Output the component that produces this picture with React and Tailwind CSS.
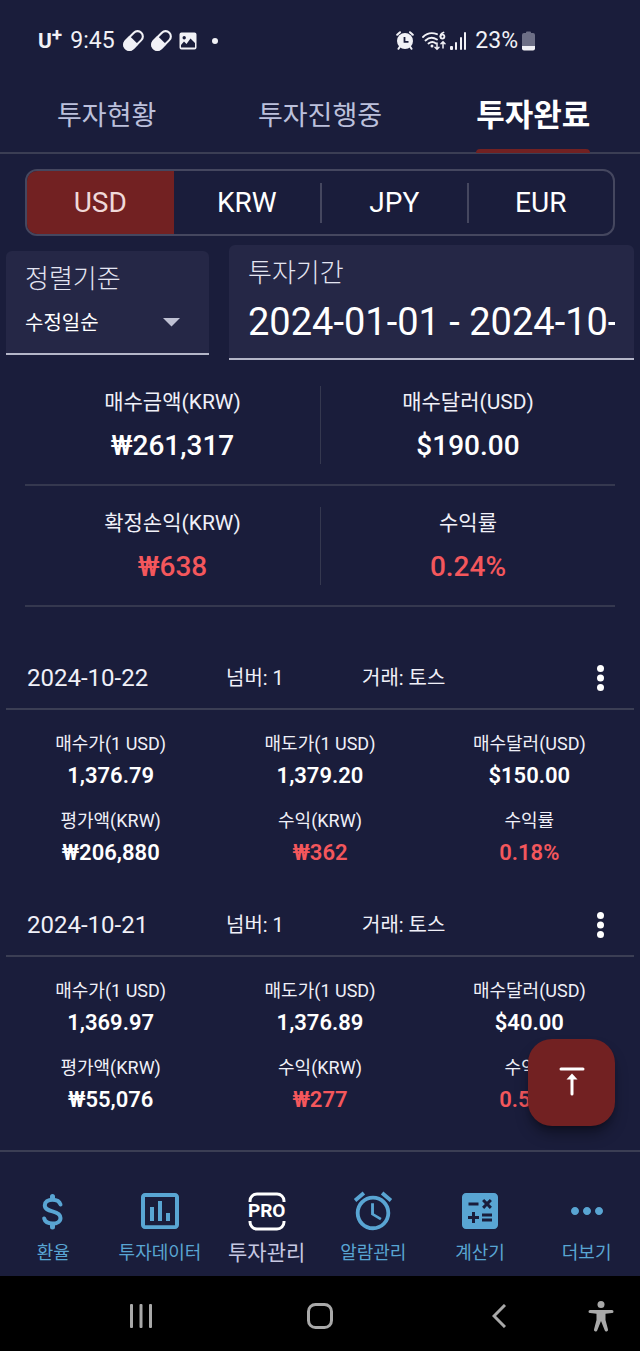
import { useState } from 'react'
import clsx from 'clsx'
import { MdAccessAlarm, MdCalculate, MdMoreHoriz } from 'react-icons/md'

const TABS = ['투자현황', '투자진행중', '투자완료']
const CURRENCIES = ['USD', 'KRW', 'JPY', 'EUR']

const SUMMARY = [
  [
    { label: '매수금액(KRW)', value: '₩261,317' },
    { label: '매수달러(USD)', value: '$190.00' },
  ],
  [
    { label: '확정손익(KRW)', value: '₩638', profit: true },
    { label: '수익률', value: '0.24%', profit: true },
  ],
]

const RECORDS = [
  {
    date: '2024-10-22',
    number: 1,
    broker: '토스',
    cells: [
      { label: '매수가(1 USD)', value: '1,376.79' },
      { label: '매도가(1 USD)', value: '1,379.20' },
      { label: '매수달러(USD)', value: '$150.00' },
      { label: '평가액(KRW)', value: '₩206,880' },
      { label: '수익(KRW)', value: '₩362', profit: true },
      { label: '수익률', value: '0.18%', profit: true },
    ],
  },
  {
    date: '2024-10-21',
    number: 1,
    broker: '토스',
    cells: [
      { label: '매수가(1 USD)', value: '1,369.97' },
      { label: '매도가(1 USD)', value: '1,376.89' },
      { label: '매수달러(USD)', value: '$40.00' },
      { label: '평가액(KRW)', value: '₩55,076' },
      { label: '수익(KRW)', value: '₩277', profit: true },
      { label: '수익률', value: '0.51%', profit: true },
    ],
  },
]

function PillIcon() {
  return (
    <svg width="21" height="21" viewBox="0 0 20 20" fill="none">
      <g transform="rotate(-45 10 10)">
        <rect x="-.500" y="5" width="21" height="10" rx="5" stroke="#f1f1f6" strokeWidth="2" />
        <path d="M10.500 4H4.500a6 6 0 000 12h6z" fill="#f1f1f6" />
      </g>
    </svg>
  )
}

function ImageIcon() {
  return (
    <svg width="18" height="18" viewBox="0 0 18 18">
      <path
        fillRule="evenodd"
        fill="#f1f1f6"
        d="M2.500 .500h13a2 2 0 012 2v13a2 2 0 01-2 2h-13a2 2 0 01-2-2v-13a2 2 0 012-2zM5.200 4a1.700 1.700 0 100 3.400A1.700 1.700 0 005.200 4zM2 13v2.500h14V11l-4.500-4.500L7.500 12 5 9.500z"
      />
    </svg>
  )
}

function StatusAlarmIcon() {
  return (
    <svg width="18" height="19" viewBox="0 0 18 19">
      <g stroke="#f1f1f6" strokeWidth="2" strokeLinecap="round">
        <path d="M1.200 3.800L4 1.200M16.800 3.800L14 1.200M4 15.500L2.500 17.800M14 15.500l1.500 2.300" />
      </g>
      <circle cx="9" cy="10" r="8" fill="#f1f1f6" />
      <path d="M8.500 6v4.800h4" fill="none" stroke="#1a1d3b" strokeWidth="1.800" />
    </svg>
  )
}

function WifiIcon() {
  return (
    <svg width="24" height="20" viewBox="0 0 24 20" fill="none" stroke="#f1f1f6" strokeWidth="1.800" strokeLinecap="round">
      <path d="M1 6C5 2 10 1.200 15 3.200M3.500 9.500C7 6.200 11 6 15 8.500M6.500 12.500c2.500-2 5-2 7.500 0" />
      <circle cx="10" cy="15" r="1.500" fill="#f1f1f6" stroke="none" />
      <path d="M21.500 1.500c-2 .500-3 2-3 3.800" />
      <circle cx="20.400" cy="5.600" r="2" />
      <path d="M15 12v6M13 16.200l2 2 2-2M21 17v-6M19 12.800l2-2 2 2" strokeWidth="1.500" />
    </svg>
  )
}

function SignalIcon() {
  return (
    <svg width="17" height="18" viewBox="0 0 17 18" fill="#f1f1f6">
      <rect x="0" y="14" width="3" height="4" rx="1" />
      <rect x="5" y="10" width="2" height="8" rx="1" />
      <rect x="10" y="5" width="2" height="13" rx="1" />
      <rect x="14" y="0" width="2" height="18" rx="1" />
    </svg>
  )
}

function BatteryIcon() {
  return (
    <svg width="13" height="20" viewBox="0 0 13 20">
      <path d="M4 1.500Q4 .500 5 .500h3q1 0 1 1V2h2q2 0 2 2v11H0V4q0-2 2-2h2z" fill="#6d6f86" />
      <path d="M0 15h13v2.500q0 2-2 2H2q-2 0-2-2z" fill="#f1f1f6" />
    </svg>
  )
}

function StatusBar() {
  return (
    <header className="flex h-20 items-center px-[38px] pt-px text-[#f1f1f6]">
      <span className="flex items-start text-[21px] leading-6 font-bold">
        U<sup className="top-0 text-[19px] leading-3">+</sup>
      </span>
      <span className="ml-2 text-[23px] leading-6">9:45</span>
      <span className="ml-2 flex items-center gap-[7px]">
        <PillIcon />
        <PillIcon />
        <ImageIcon />
        <span className="ml-2 size-[6px] rounded-full bg-[#f1f1f6]" />
      </span>
      <span className="mr-[67px] ml-auto flex items-center">
        <StatusAlarmIcon />
        <span className="ml-2"><WifiIcon /></span>
        <span className="ml-1"><SignalIcon /></span>
        <span className="ml-2 text-[23px] leading-6">23%</span>
        <span className="ml-1"><BatteryIcon /></span>
      </span>
    </header>
  )
}

function Tabs() {
  const [active, setActive] = useState('투자완료')

  return (
    <nav className="grid h-[74px] grid-cols-3 border-b-2 border-[#3b3e54]">
      {TABS.map((tab) => (
        <button
          key={tab}
          onClick={() => setActive(tab)}
          className={clsx(
            'flex justify-center',
            active === tab ? 'text-[31px] font-bold text-white' : 'text-[27px] text-[#bcc0dc]'
          )}
        >
          <span className="flex h-[73px] flex-col">
            <span className="flex flex-1 items-center pt-1">{tab}</span>
            <span className={clsx('h-1 rounded-t-sm', active === tab && 'bg-[#722122]')} />
          </span>
        </button>
      ))}
    </nav>
  )
}

function CurrencyPicker() {
  const [currency, setCurrency] = useState('USD')

  return (
    <div className="mx-[25px] mt-[15px] flex h-[67px] overflow-hidden rounded-xl border-2 border-[#45475f]">
      {CURRENCIES.map((code, i) => (
        <button
          key={code}
          onClick={() => setCurrency(code)}
          className={clsx(
            'flex flex-1 items-center text-[28px] leading-8',
            currency === code ? 'bg-[#722122] text-[#f0d9d9]' : 'text-white'
          )}
        >
          <span className={clsx('flex h-10 flex-1 items-center justify-center', i > 1 && 'border-l-2 border-[#45475f]')}>
            {code}
          </span>
        </button>
      ))}
    </div>
  )
}

function Filters() {
  return (
    <div className="mt-[9px] flex items-center gap-5 px-[6px]">
      <div className="flex h-[104px] w-[203px] shrink-0 flex-col rounded-t-md border-b-2 border-[#b4b6c8] bg-[#252746] px-[19px] pt-[10px]">
        <label htmlFor="sort" className="text-[26px] leading-9 font-light text-[#e4e5f2]">정렬기준</label>
        <div className="relative mt-2 flex items-center">
          <select id="sort" className="w-full appearance-none bg-transparent text-[20px] leading-9 text-white outline-none">
            <option>수정일순</option>
          </select>
          <svg className="pointer-events-none absolute right-[10px]" width="17" height="9" viewBox="0 0 17 9">
            <path d="M0 0h17L8.500 8.500z" fill="#bfc1d3" />
          </svg>
        </div>
      </div>
      <div className="flex h-[115px] min-w-0 flex-1 flex-col rounded-t-md border-b-2 border-[#b4b6c8] bg-[#252746] px-[19px] pt-[10px]">
        <label htmlFor="period" className="text-[26px] leading-9 font-light text-[#e4e5f2]">투자기간</label>
        <input
          id="period"
          readOnly
          defaultValue="2024-01-01 - 2024-10-"
          className="mt-[7px] h-12 w-full bg-transparent text-[38px] leading-[48px] text-white outline-none"
        />
      </div>
    </div>
  )
}

function Summary() {
  return (
    <section className="mx-[25px] mt-[5px]">
      {SUMMARY.map((row, i) => (
        <div key={i} className="grid grid-cols-2 border-b-2 border-[#35384f] pt-[21px] pb-5">
          {row.map((item, j) => (
            <div key={item.label} className={clsx('flex h-[78px] flex-col items-center gap-[10px]', j === 1 && 'border-l border-[#35384f]')}>
              <span className="text-[21px] leading-8 text-[#f0f0f8]">{item.label}</span>
              <span className={clsx('text-[28px] leading-9 font-medium', item.profit ? 'text-[#f4575c]' : 'text-white')}>
                {item.value}
              </span>
            </div>
          ))}
        </div>
      ))}
    </section>
  )
}

function Record({ date, number, broker, cells }) {
  return (
    <article className="px-[6px]">
      <div className="flex h-16 items-center border-b-2 border-[#3b3e54] pt-[2px] pl-[21px] text-[20px] text-[#f0f0f8]">
        <span className="w-[199px] text-[24px]">{date}</span>
        <span className="w-[136px]">넘버: {number}</span>
        <span className="flex-1">거래: {broker}</span>
        <button aria-label="메뉴" className="mr-[22px] flex w-6 justify-center">
          <svg width="7" height="26" viewBox="0 0 7 26" fill="white">
            <circle cx="3.500" cy="3.500" r="3.500" />
            <circle cx="3.500" cy="13" r="3.500" />
            <circle cx="3.500" cy="22.500" r="3.500" />
          </svg>
        </button>
      </div>
      <div className="grid grid-cols-3 gap-y-[17px] pt-5 pb-[26px]">
        {cells.map((cell) => (
          <div key={cell.label} className="flex flex-col items-center gap-1">
            <span className="text-[18px] leading-7 text-[#f0f0f8]">{cell.label}</span>
            <span className={clsx('text-[22px] leading-7 font-semibold', cell.profit ? 'text-[#f4575c]' : 'text-white')}>
              {cell.value}
            </span>
          </div>
        ))}
      </div>
    </article>
  )
}

function DollarIcon() {
  return (
    <svg width="48" height="48" viewBox="0 0 48 48" fill="none" stroke="currentColor" strokeLinecap="round">
      <path d="M31.500 17.500c-1-3.200-4-4.800-8-4.800-4.500 0-7.700 2.200-7.700 5.600 0 3.700 3.200 4.900 7.700 6.100 5 1.300 8 2.800 8 6.500 0 3.500-3.300 5.600-8 5.600-4.500 0-7.500-1.700-8.300-5" strokeWidth="4" />
      <path d="M23.500 9.500v2M23.500 38v2" strokeWidth="5" />
    </svg>
  )
}

function ChartIcon() {
  return (
    <svg width="48" height="48" viewBox="0 0 24 24" fill="currentColor">
      <path d="M9 17H7v-7h2v7zm4 0h-2V7h2v10zm4 0h-2v-4h2v4zm2.500 2.100h-15V5h15v14.100zm0-16.100h-15c-1.100 0-2 .900-2 2v14c0 1.100.900 2 2 2h15c1.100 0 2-.900 2-2V5c0-1.100-.900-2-2-2z" />
    </svg>
  )
}

function ProIcon() {
  return (
    <span className="relative flex size-12 items-center justify-center">
      <svg className="absolute inset-0" width="48" height="48" viewBox="0 0 48 48" fill="none" stroke="white" strokeWidth="3">
        <path d="M7 15v-1a7 7 0 017-7h20a7 7 0 017 7v1M7 34v1a7 7 0 007 7h20a7 7 0 007-7v-1" />
      </svg>
      <span className="relative text-[19px] leading-6 font-bold text-white">PRO</span>
    </span>
  )
}

const NAV = [
  { label: '환율', icon: <DollarIcon /> },
  { label: '투자데이터', icon: <ChartIcon /> },
  { label: '투자관리', icon: <ProIcon />, active: true },
  { label: '알람관리', icon: <MdAccessAlarm size={46} /> },
  { label: '계산기', icon: <MdCalculate size={48} /> },
  { label: '더보기', icon: <MdMoreHoriz size={48} /> },
]

function BottomNav() {
  return (
    <nav className="grid h-[126px] grid-cols-6 border-t-2 border-[#3b3e54] pt-[35px]">
      {NAV.map((item) => (
        <a key={item.label} href="#" className="flex flex-col items-center text-[#59a5d3]">
          <span className="flex h-12 items-center">{item.icon}</span>
          <span
            className={clsx(
              'leading-9 whitespace-nowrap',
              item.active ? 'text-[21px] text-[#c6c8e2]' : 'text-[18px]'
            )}
          >
            {item.label}
          </span>
        </a>
      ))}
    </nav>
  )
}

function SystemBar() {
  return (
    <footer className="grid h-[75px] grid-cols-[52px_1fr_1fr_1fr_52px] items-center bg-black pt-1 text-[#a9a9a9]">
      <span />
      <button aria-label="최근" className="flex justify-center">
        <svg width="24" height="24" viewBox="0 0 24 24" fill="currentColor">
          <rect x="1" y="0" width="3" height="24" rx="1" />
          <rect x="10.500" y="0" width="3" height="24" rx="1" />
          <rect x="20" y="0" width="3" height="24" rx="1" />
        </svg>
      </button>
      <button aria-label="홈" className="flex justify-center">
        <svg width="26" height="26" viewBox="0 0 26 26" fill="none" stroke="currentColor" strokeWidth="3">
          <rect x="1.500" y="1.500" width="23" height="23" rx="7" />
        </svg>
      </button>
      <button aria-label="뒤로" className="flex justify-center">
        <svg width="14" height="24" viewBox="0 0 14 24" fill="none" stroke="currentColor" strokeWidth="3">
          <path d="M13 1L2 12l11 11" />
        </svg>
      </button>
      <button aria-label="접근성">
        <svg width="26" height="32" viewBox="0 0 26 32" fill="currentColor">
          <circle cx="13" cy="4.500" r="3.500" />
          <path d="M2 10h22a1.500 1.500 0 010 3l-6.500.800V20L20 29.500a1.700 1.700 0 01-3.300.800L13 21 9.300 30.300A1.700 1.700 0 016 29.500L8.500 20v-6.200L2 13a1.500 1.500 0 010-3z" />
        </svg>
      </button>
    </footer>
  )
}

export default function App() {
  return (
    <div className="flex min-h-screen flex-col bg-[#1a1d3b] font-['Roboto','Noto_Sans_CJK_KR',sans-serif]">
      <StatusBar />
      <Tabs />
      <main className="relative flex-1">
        <CurrencyPicker />
        <Filters />
        <Summary />
        <div className="mt-[39px]">
          {RECORDS.map((record) => (
            <Record key={record.date} {...record} />
          ))}
        </div>
        {/* Scroll to top */}
        <button
          aria-label="맨 위로"
          className="absolute right-[25px] bottom-6 flex size-[87px] items-center justify-center rounded-3xl bg-[#722122] pb-1 shadow-lg shadow-black/40"
        >
          <svg width="26" height="30" viewBox="0 0 26 30" fill="none" stroke="white" strokeWidth="3" strokeLinecap="round">
            <path d="M2 3h22M13 12v16" />
            <path d="M13 7.500l5.500 6h-11z" fill="white" stroke="none" />
          </svg>
        </button>
      </main>
      <BottomNav />
      <SystemBar />
    </div>
  )
}
